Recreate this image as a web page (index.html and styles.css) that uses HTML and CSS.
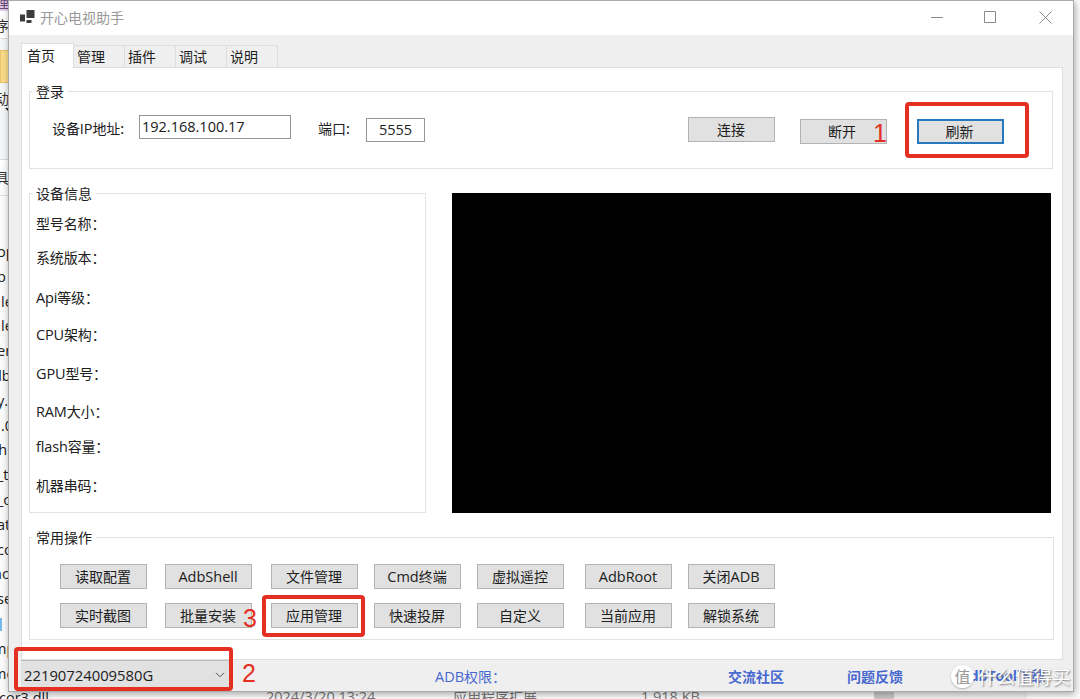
FILE: index.html
```html
<!DOCTYPE html>
<html lang="zh-CN">
<head>
<meta charset="utf-8">
<title>开心电视助手</title>
<link rel="stylesheet" href="styles.css">
</head>
<body>
<div class="desktop">
  <div class="explorer">
    <div class="ribbon">
      <div class="rb-purple">理</div>
      <div class="rb-menu">序</div>
      <div class="rb-gap"></div>
      <div class="rb-yellow"></div>
      <div class="rb-tools">动<i class="caret"></i></div>
      <div class="rb-path"></div>
      <div class="rb-head">具</div>
    </div>
    <div class="names">
      <span class="n">op</span><span class="n">p</span><span class="n in">le</span><span class="n in">le</span><span class="n">en</span><span class="n shift">db</span><span class="n">y.</span><span class="n in">.0</span><span class="n shift">th</span><span class="n">_to</span><span class="n">_c</span><span class="n">at</span><span class="n">co</span><span class="n shift">nc</span><span class="n">se</span><span class="n"><i class="mark"></i></span><span class="n shift">mp</span><span class="n shift">me</span><span class="n last">cor3.dll</span>
    </div>
  </div>
  <div class="file-row">
    <span class="date">2024/3/20 13:24</span><span class="kind">应用程序扩展</span><span class="size">1,918 KB</span><i class="thumb"></i><i class="track"></i>
  </div>

  <main class="window">
    <header class="titlebar">
      <svg class="app-icon" width="16" height="14" viewBox="0 0 16 14"><path fill="#3c3c3c" d="M6.500 0h8v8h-8zM0 4.500h5v7H0zM6.500 10h5v3h-5z"/></svg>
      <span class="title">开心电视助手</span>
      <svg class="controls" width="122" height="14" viewBox="0 0 122 14"><g fill="none" stroke="#8b8b8b"><path d="M0 7.500h12M53.500 1.500h11v11h-11zM108.500 1.500l12 12M120.500 1.500l-12 12"/></g></svg>
    </header>
    <nav class="tabs">
      <span class="tab active">首页</span><span class="tab">管理</span><span class="tab">插件</span><span class="tab">调试</span><span class="tab">说明</span>
    </nav>
    <section class="page">
      <fieldset class="login">
        <legend>登录</legend>
        <div class="login-row">
          <label class="ip-label">设备<b class="lat">IP</b>地址:</label>
          <span class="field ip lat">192.168.100.17</span>
          <label class="port-label">端口:</label>
          <span class="field port lat">5555</span>
          <span class="btn connect">连接</span>
          <span class="btn cut">断开</span>
          <span class="btn focus">刷新</span>
        </div>
      </fieldset>
      <div class="middle">
        <fieldset class="info">
          <legend>设备信息</legend>
          <div class="info-list">
            <span>型号名称：</span><span>系统版本：</span><span><b class="lat">Api</b>等级：</span><span><b class="lat">CPU</b>架构：</span><span><b class="lat">GPU</b>型号：</span><span><b class="lat">RAM</b>大小：</span><span><b class="lat">flash</b>容量：</span><span>机器串码：</span>
          </div>
        </fieldset>
        <div class="screen"></div>
      </div>
      <fieldset class="ops">
        <legend>常用操作</legend>
        <div class="op-grid">
          <span class="btn">读取配置</span><span class="btn lat">AdbShell</span><span class="btn">文件管理</span><span class="btn"><b class="lat">Cmd</b>终端</span><span class="btn">虚拟遥控</span><span class="btn lat">AdbRoot</span><span class="btn">关闭<b class="lat">ADB</b></span>
          <span class="btn">实时截图</span><span class="btn">批量安装</span><span class="btn">应用管理</span><span class="btn">快速投屏</span><span class="btn">自定义</span><span class="btn">当前应用</span><span class="btn">解锁系统</span>
        </div>
      </fieldset>
    </section>
    <footer class="status">
      <span class="select lat">22190724009580G<svg width="10" height="6" viewBox="0 0 10 6"><path d="M1 .8l4 4 4-4" fill="none" stroke="#555"/></svg></span>
      <span class="auth"><b class="lat">ADB</b>权限：</span>
      <span class="link community">交流社区</span>
      <span class="link feedback">问题反馈</span>
      <span class="link tool">AdbTool下载</span>
    </footer>
  </main>

  <div class="mark-box box1"></div><span class="num num1">1</span>
  <div class="mark-box box2"></div><span class="num num2">2</span>
  <div class="mark-box box3"></div><span class="num num3">3</span>
  <div class="watermark"><span class="seal">值</span><span class="wm-text">什么值得买</span></div>
</div>
</body>
</html>
```
FILE: styles.css
```css
* { box-sizing: border-box; }
body { margin: 0; font: 14px/18px "Noto Sans CJK SC", sans-serif; color: #202020; }
.desktop { position: relative; width: 1080px; height: 699px; overflow: hidden; background: #fbfbfb; }
.lat { font-family: "Open Sans", "Noto Sans CJK SC", sans-serif; font-size: 14.500px; font-weight: 400; }

.explorer { width: 60px; height: 699px; overflow: hidden; white-space: nowrap; }
.ribbon { height: 240px; color: #333; }
.ribbon div { overflow: hidden; text-indent: -5px; }
.rb-purple { height: 11px; background: #e4c9f2; line-height: 4px; color: #665070; }
.rb-menu { height: 28px; line-height: 28px; background: #fff; border-bottom: 1px solid #ddd; }
.rb-gap { height: 11px; background: #f5f6f7; }
.rb-yellow { height: 33px; background: #fbdc8a; border: 1px solid #e9c66c; }
.rb-tools { height: 77px; line-height: 30px; background: #f5f6f7; border-bottom: 1px solid #ddd; }
.caret { display: block; width: 0; margin: -5px 0 0 5px; border: 3px solid transparent; border-top-color: #222; }
.rb-path { height: 5px; background: #fff; }
.rb-head { height: 31px; line-height: 25px; border-bottom: 1px solid #ddd; }
.names { display: grid; grid-auto-rows: 24.800px; font: 14.500px/24px "Open Sans", sans-serif; }
.n { height: 24px; margin-left: -3px; }
.n.shift { margin-left: -7px; }
.n.in { margin-left: 1px; }
.n.last { margin-left: -1px; }
.mark { display: block; width: 2px; height: 13px; margin: 6px 0 0 3px; background: #79b9e8; }

.file-row { position: absolute; left: 266px; top: 687px; width: 814px; height: 20px; display: flex; font: 14.500px/20px "Open Sans", "Noto Sans CJK SC", sans-serif; color: #777; }
.date { width: 187px; }
.kind { width: 188px; font-size: 14px; }
.size { width: 233px; }
.thumb { width: 20px; background: #c9c9c9; }
.track { width: 133px; background: #f0f0f0; }

.window { position: absolute; left: 9px; top: 1px; width: 1064px; height: 690px; background: #efefef; outline: 1px solid #aaa; box-shadow: 1px 2px 7px 1px rgba(0,0,0,.34); }
.titlebar { height: 34px; background: #fff; display: flex; align-items: center; padding: 0 20px 2px 11px; color: #999; }
.title { margin-left: 4px; }
.controls { margin-left: auto; }
.tabs { height: 32px; padding: 8px 0 0 12px; display: flex; align-items: flex-end; }
.tab { width: 51px; height: 22px; line-height: 21px; padding-left: 3px; border: 1px solid #dedede; border-width: 1px 1px 0 0; }
.tab.active { width: 53px; height: 25px; line-height: 22px; padding-left: 5px; margin-bottom: -1px; background: #fff; border-left-width: 1px; position: relative; z-index: 1; }
.page { margin-left: 12px; width: 1042px; height: 593px; background: #fff; border: 1px solid #dedede; padding: 15px 0 0 7px; }
fieldset { margin: 0; padding: 0; border: 1px solid #e2e2e2; min-width: 0; }
legend { height: 17px; line-height: 17px; margin-left: 2px; padding: 0 4px; }
.login { width: 1024px; height: 86px; }
.login-row { display: flex; align-items: flex-start; padding-top: 14px; }
.ip-label { width: 109px; padding: 5px 0 0 22px; white-space: nowrap; letter-spacing: -.1px; }
.port-label { width: 48px; margin-left: 27px; padding-top: 5px; }
.field { height: 24px; border: 1px solid #969696; line-height: 22px; }
.ip { width: 152px; margin-top: 1px; padding-left: 2px; }
.port { width: 59px; margin-top: 4px; text-align: center; }
.btn { width: 87px; height: 25px; line-height: 23px; background: #e1e1e1; border: 1px solid #b3b3b3; text-align: center; white-space: nowrap; text-indent: -1px; }
.connect { margin: 3px 0 0 263px; }
.cut { margin: 5px 0 0 25px; text-indent: -3px; }
.focus { margin: 5px 0 0 30px; border: 2px solid #2878be; line-height: 21px; text-indent: -2px; }
.middle { display: flex; height: 329px; margin-top: 16px; }
.info { width: 397px; height: 328px; }
.info-list { display: grid; grid-template-rows: 34px 40px 37px 39px 38px 35px 39px 20px; padding: 11px 0 0 6px; }
.info-list span { height: 20px; line-height: 20px; letter-spacing: -.15px; }
.screen { width: 599px; height: 320px; margin: 8px 0 0 26px; background: #000; }
.ops { width: 1025px; height: 111px; margin-top: 15px; }
.op-grid { display: grid; grid-template-columns: 105px 106px 103px 103px 108px 103px 87px; grid-auto-rows: 39px; padding: 18px 0 0 30px; }
.status { display: flex; height: 31px; align-items: flex-start; color: #4768cf; white-space: nowrap; }
.select { width: 211px; height: 29px; margin-left: 12px; padding: 0 7px 0 3px; line-height: 30px; font-size: 14.800px; color: #202020; background: #e1e1e1; border-top: 1px solid #bbb; display: flex; justify-content: space-between; align-items: center; }
.auth { width: 293px; margin-left: 203px; padding-top: 7px; }
.link { padding-top: 7px; font-weight: 700; }
.community { width: 119px; }
.feedback { width: 113px; }
.tool { font-family: "Open Sans", "Noto Sans CJK SC", sans-serif; }

.mark-box { position: absolute; border: 4px solid #e43022; border-radius: 4px; }
.box1 { left: 905px; top: 102px; width: 124px; height: 56px; }
.box2 { left: 14px; top: 647px; width: 219px; height: 44px; }
.box3 { left: 262px; top: 595px; width: 103px; height: 42px; }
.num { position: absolute; font: 25px/28px "Liberation Sans", sans-serif; color: #e43022; }
.num1 { left: 873px; top: 119px; }
.num2 { left: 242px; top: 659px; }
.num3 { left: 243px; top: 604px; }
.watermark { position: absolute; left: 951px; top: 664px; display: flex; align-items: center; gap: 4px; color: #fff; white-space: nowrap; }
.seal { width: 23px; height: 23px; border-radius: 50%; background: #fff; color: #999; font-size: 16px; line-height: 22px; text-align: center; box-shadow: 0 1px 2px rgba(0,0,0,.25); }
.wm-text { font-size: 18.500px; line-height: 24px; text-shadow: 1px 1px 2px #777; }
```
